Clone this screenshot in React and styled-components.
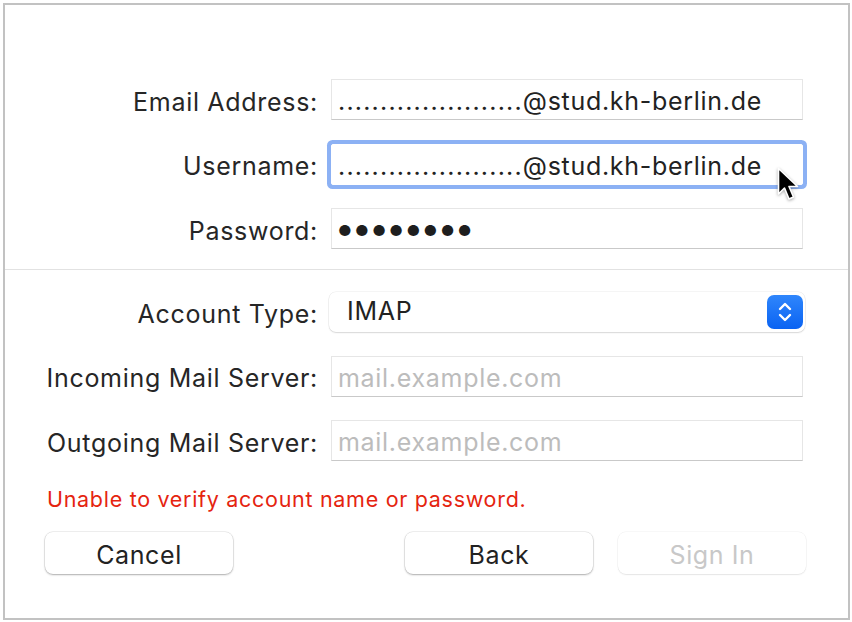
import React from "react";
import styled, { createGlobalStyle } from "styled-components";

const GlobalStyle = createGlobalStyle`
  html, body {
    margin: 0;
    padding: 0;
    background: #ffffff;
  }
  body {
    font-family: Inter, "Noto Sans", "Liberation Sans", sans-serif;
    -webkit-font-smoothing: antialiased;
  }
`;

const Page = styled.div`
  width: 852px;
  height: 622px;
  padding: 3px 2px 2px 3px;
  box-sizing: border-box;
`;

const Frame = styled.div`
  width: 847px;
  height: 617px;
  border: 2px solid #c2c2c2;
  box-sizing: border-box;
  display: flex;
  flex-direction: column;
`;

const Section = styled.div`
  display: grid;
  grid-template-columns: 313px 472px;
  column-gap: 13px;
  row-gap: 23.5px;
  align-items: center;
  padding: ${(p) => p.$pad};
`;

const Label = styled.label`
  text-align: right;
  font-size: 25px;
  color: #262626;
  letter-spacing: 0.7px;
  white-space: nowrap;
  padding-top: 4px;
`;

const FieldWrap = styled.div`
  position: relative;
`;

const Field = styled.div`
  height: 41px;
  box-sizing: border-box;
  background: #fff;
  border: 1px solid #e6e6e6;
  border-bottom-color: #c9c9c9;
  display: flex;
  align-items: center;
  padding: 3px 0 0 6px;
  font-size: 25px;
  letter-spacing: 0.7px;
  color: ${(p) => (p.$placeholder ? "#bcbcbc" : "#222")};
  white-space: nowrap;
  overflow: hidden;
  ${(p) =>
    p.$focused &&
    `
    border-color: #ffffff;
    box-shadow: 0 0 0 4px #8cb1f4;
    border-radius: 2px;
  `}
`;

const Dots = styled.span`
  letter-spacing: 1.2px;
`;

const Bullets = styled.span`
  font-size: 15px;
  letter-spacing: 3.4px;
  color: #1e1e1e;
`;

const Cursor = styled.svg`
  position: absolute;
  left: 446px;
  top: 23px;
  width: 24px;
  height: 36px;
  filter: drop-shadow(0 1px 1.5px rgba(0, 0, 0, 0.35));
`;

const Divider = styled.div`
  height: 1px;
  background: #e2e2e2;
`;

const Popup = styled.div`
  height: 40px;
  margin-left: -2px;
  margin-right: -2px;
  box-sizing: border-box;
  background: #fff;
  border-radius: 7px;
  box-shadow: 0 0 0 0.5px rgba(0, 0, 0, 0.08), 0 1px 1.5px rgba(0, 0, 0, 0.12);
  display: flex;
  align-items: center;
  justify-content: space-between;
  padding: 0 2px 0 18px;
  font-size: 25px;
  letter-spacing: 0.7px;
  color: #222;
`;

const PopupText = styled.span`
  padding-bottom: 2px;
`;

const Stepper = styled.div`
  width: 36px;
  height: 34px;
  border-radius: 7px;
  background: linear-gradient(#2f86fc, #0a63f2);
  display: flex;
  align-items: center;
  justify-content: center;
`;

const ErrorText = styled.div`
  color: #e5240f;
  font-size: 21.5px;
  padding: 25px 0 0 42px;
  height: 28px;
  letter-spacing: 0.7px;
`;

const ButtonRow = styled.div`
  display: flex;
  align-items: center;
  padding: 18px 0 0 40px;
`;

const Button = styled.button`
  width: 188px;
  height: 42px;
  border: none;
  border-radius: 8px;
  background: #fff;
  font-family: inherit;
  font-size: 25px;
  letter-spacing: 0.6px;
  color: ${(p) => (p.disabled ? "#c8c8c8" : "#222")};
  box-shadow: ${(p) =>
    p.disabled
      ? "0 0 0 0.5px rgba(0,0,0,0.06), 0 1px 1.5px rgba(0,0,0,0.08)"
      : "0 0 0 0.5px rgba(0,0,0,0.12), 0 1px 2px rgba(0,0,0,0.28)"};
  margin-left: ${(p) => p.$gap || 0}px;
  padding: 3px 0 0;
`;

const dots = ".".repeat(22);

export default function App() {
  return (
    <Page>
      <GlobalStyle />
      <Frame>
        <Section $pad="74px 0 20px 0">
          <Label>Email Address:</Label>
          <Field>
            <Dots>{dots}</Dots>@stud.kh-berlin.de
          </Field>
          <Label>Username:</Label>
          <FieldWrap>
            <Field $focused>
              <Dots>{dots}</Dots>@stud.kh-berlin.de
            </Field>
            <Cursor viewBox="0 0 24 36">
              <path
                d="M1.5 1.5 L1.5 27 L7.5 21 L12 32 L16.5 30 L12 19.5 L20.5 19.5 Z"
                fill="#000"
                stroke="#fff"
                strokeWidth="1.6"
                strokeLinejoin="round"
              />
            </Cursor>
          </FieldWrap>
          <Label>Password:</Label>
          <Field>
            <Bullets>●●●●●●●●</Bullets>
          </Field>
        </Section>
        <Divider />
        <Section $pad="22px 0 0 0">
          <Label>Account Type:</Label>
          <Popup>
            <PopupText>IMAP</PopupText>
            <Stepper>
              <svg width="18" height="24" viewBox="0 0 18 24">
                <path
                  d="M4 9 L9 4 L14 9 M4 15 L9 20 L14 15"
                  fill="none"
                  stroke="#fff"
                  strokeWidth="2.4"
                  strokeLinecap="round"
                  strokeLinejoin="round"
                />
              </svg>
            </Stepper>
          </Popup>
          <Label>Incoming Mail Server:</Label>
          <Field $placeholder>mail.example.com</Field>
          <Label>Outgoing Mail Server:</Label>
          <Field $placeholder>mail.example.com</Field>
        </Section>
        <ErrorText>Unable to verify account name or password.</ErrorText>
        <ButtonRow>
          <Button>Cancel</Button>
          <Button $gap={172}>Back</Button>
          <Button $gap={25} disabled>
            Sign In
          </Button>
        </ButtonRow>
      </Frame>
    </Page>
  );
}
